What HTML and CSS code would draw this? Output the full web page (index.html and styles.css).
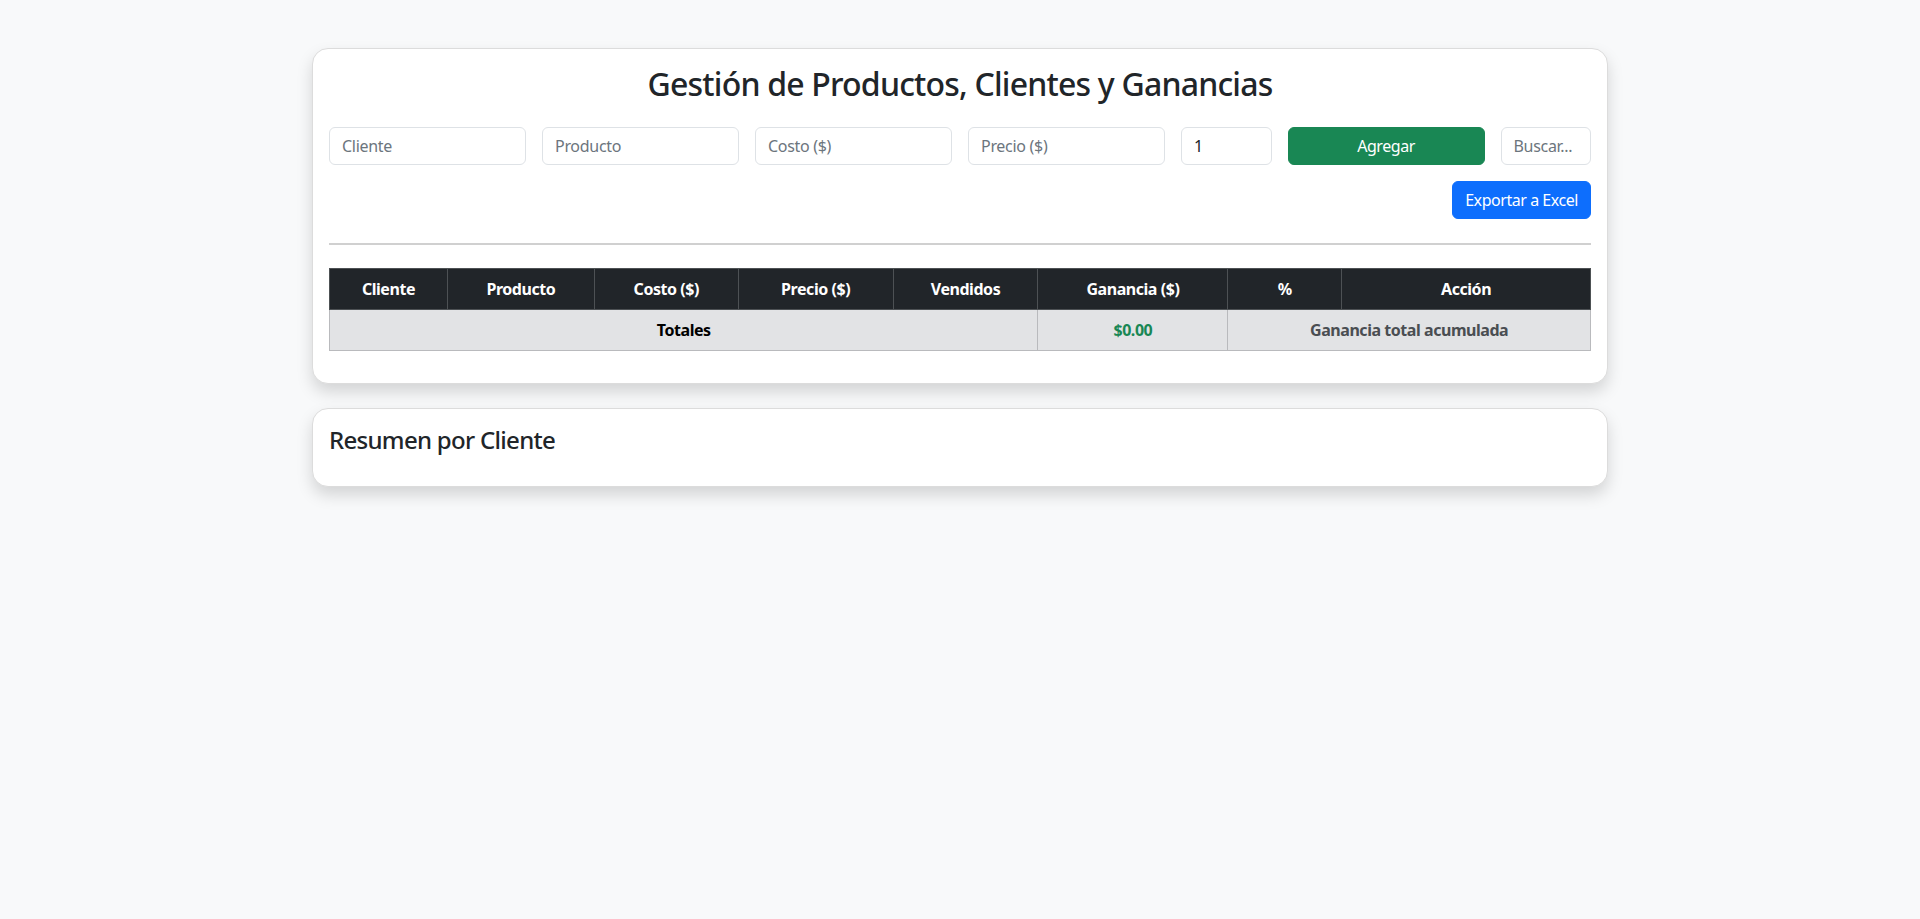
FILE: index.html
```html
<!DOCTYPE html>
<html lang="es">
<head>
<meta charset="utf-8">
<title>Gestión de Productos, Clientes y Ganancias</title>
<link rel="stylesheet" href="styles.css">
</head>
<body>
<div class="container">
  <div class="card">
    <h2 class="title">Gestión de Productos, Clientes y Ganancias</h2>
    <div class="form-row">
      <input class="field c2" type="text" placeholder="Cliente">
      <input class="field c2" type="text" placeholder="Producto">
      <input class="field c2" type="text" placeholder="Costo ($)">
      <input class="field c2" type="text" placeholder="Precio ($)">
      <input class="field c1" type="number" value="1">
      <button class="btn btn-green c2">Agregar</button>
      <input class="field c1" type="text" placeholder="Buscar...">
    </div>
    <div class="export-row">
      <button class="btn btn-blue">Exportar a Excel</button>
    </div>
    <hr class="divider">
    <table class="tbl">
      <thead>
        <tr>
          <th class="w-cliente">Cliente</th>
          <th class="w-producto">Producto</th>
          <th class="w-costo">Costo ($)</th>
          <th class="w-precio">Precio ($)</th>
          <th class="w-vendidos">Vendidos</th>
          <th class="w-ganancia">Ganancia ($)</th>
          <th class="w-pct">%</th>
          <th class="w-accion">Acción</th>
        </tr>
      </thead>
      <tbody>
        <tr class="totals">
          <td colspan="5" class="tot-label">Totales</td>
          <td class="tot-value">$0.00</td>
          <td colspan="2" class="tot-note">Ganancia total acumulada</td>
        </tr>
      </tbody>
    </table>
  </div>
  <div class="card card-summary">
    <h4 class="subtitle">Resumen por Cliente</h4>
  </div>
</div>
</body>
</html>
```

FILE: styles.css
```css
* { box-sizing: border-box; }
html, body { margin: 0; padding: 0; }
body {
  background: #f8f9fa;
  font-family: "Noto Sans", "Open Sans", sans-serif;
  font-size: 16px;
  line-height: 1.5;
  color: #212529;
}
.container {
  width: 1296px;
  margin: 48px auto 0;
}
.card {
  background: #fff;
  border: 1px solid #dcdcdc;
  border-radius: 16px;
  box-shadow: 0 8px 16px rgba(0, 0, 0, 0.15);
  padding: 16px;
  margin-bottom: 24px;
}
.title {
  margin: 0 0 24px;
  text-align: center;
  font-size: 32px;
  font-weight: 500;
  line-height: 1.2;
  letter-spacing: -0.8px;
}
.form-row {
  display: flex;
  gap: 16px;
}
.c2 { width: 197px; flex: 0 0 197px; }
.c1 { width: 90.5px; flex: 0 0 90.5px; }
.field {
  height: 38px;
  padding: 6px 12px;
  font: inherit;
  font-size: 16px;
  letter-spacing: -0.3px;
  color: #212529;
  background: #fff;
  border: 1px solid #dee2e6;
  border-radius: 6px;
  outline: none;
  -moz-appearance: textfield;
}
.field::placeholder { color: #6c757d; }
.field::-webkit-outer-spin-button,
.field::-webkit-inner-spin-button { -webkit-appearance: none; margin: 0; }
.btn {
  height: 38px;
  padding: 6px 12px;
  font: inherit;
  font-size: 16px;
  letter-spacing: -0.45px;
  color: #fff;
  border: 1px solid transparent;
  border-radius: 6px;
  cursor: pointer;
}
.btn-green { background: #198754; border-color: #198754; }
.btn-blue { background: #0d6efd; border-color: #0d6efd; }
.export-row {
  display: flex;
  justify-content: flex-end;
  margin-top: 16px;
}
.divider {
  margin: 24px 0 23px;
  border: 0;
  border-top: 2px solid #d0d0d0;
  height: 0;
}
.tbl {
  width: 100%;
  border-collapse: collapse;
  margin-bottom: 16px;
  font-size: 16px;
  letter-spacing: -0.45px;
}
.tbl th, .tbl td {
  padding: 8px;
  text-align: center;
  font-weight: 700;
  line-height: 24px;
}
.tbl th {
  background: #212529;
  color: #fff;
  border: 1px solid #4d5154;
}
.tbl td {
  background: #e2e3e5;
  border: 1px solid #b9babd;
  color: #000;
}
.tot-value { color: #198754 !important; }
.tot-note { color: #4a4e52 !important; }
.w-cliente { width: 118px; }
.w-producto { width: 147px; }
.w-costo { width: 144px; }
.w-precio { width: 155px; }
.w-vendidos { width: 145px; }
.w-ganancia { width: 190px; }
.w-pct { width: 114px; }
.w-accion { width: 249px; }
.card-summary { padding: 17px 16px 17px; }
.subtitle {
  margin: 0 0 14px;
  font-size: 24px;
  font-weight: 500;
  line-height: 1.2;
  letter-spacing: -0.7px;
}
```
